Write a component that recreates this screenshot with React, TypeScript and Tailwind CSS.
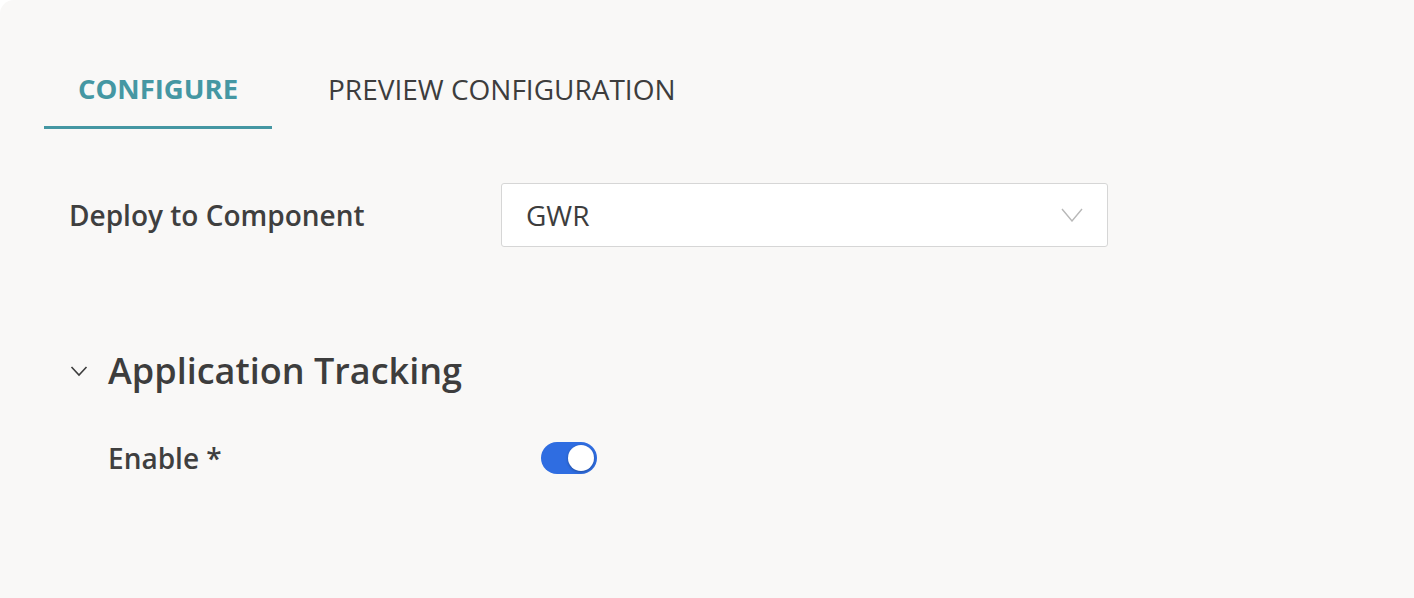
import React from "react";

export default function App() {
  return (
    <div className="w-[1414px] h-[598px] bg-white overflow-hidden" style={{ fontFamily: '"Open Sans", sans-serif' }}>
      <div className="h-full w-full bg-[#f9f8f7] rounded-tl-[14px] pt-[58px]">
        {/* Tabs */}
        <div className="flex pl-[44px]">
          <div className="w-[228px] h-[71px] flex flex-col items-center justify-between">
            <span className="text-[27.5px] font-bold text-[#4597a3] mt-[13px] leading-[36px]">CONFIGURE</span>
            <div className="h-[3px] w-full bg-[#4597a3]" />
          </div>
          <div className="pl-[56px]">
            <span className="block text-[28px] text-[#3d3d3d] mt-[13px] leading-[36px]">PREVIEW CONFIGURATION</span>
          </div>
        </div>

        {/* Deploy to Component */}
        <div className="flex items-center mt-[54px] pl-[69px]">
          <span className="w-[432px] text-[28px] font-semibold text-[#3f3f3f]">Deploy to Component</span>
          <div className="w-[607px] h-[64px] bg-white border border-[#d6d6d6] rounded-[3px] flex items-center justify-between pl-[24px] pr-[24px]">
            <span className="text-[28px] text-[#3d3d3d]">GWR</span>
            <svg width="22" height="14" viewBox="0 0 22 14" fill="none">
              <path d="M1 1 L11 13 L21 1" stroke="#b8b8b8" strokeWidth="1.4" />
            </svg>
          </div>
        </div>

        {/* Application Tracking */}
        <div className="flex items-center mt-[100px] pl-[70px]">
          <svg width="18" height="12" viewBox="0 0 18 12" fill="none" className="mr-[20px]">
            <path d="M1.5 2 L9 10 L16.5 2" stroke="#3d3d3d" strokeWidth="1.6" />
          </svg>
          <span className="text-[36px] font-semibold text-[#3d3d3d] leading-[48px]">Application Tracking</span>
        </div>

        <div className="flex items-center mt-[43px] pl-[108px]">
          <span className="w-[433px] text-[28px] font-semibold text-[#3f3f3f] leading-[40px]">Enable *</span>
          <div className="w-[56px] h-[32px] rounded-full bg-[#2f6de1] relative">
            <div className="absolute right-[3px] top-[3px] w-[26px] h-[26px] rounded-full bg-white shadow-[0_1px_3px_rgba(0,0,0,0.3)]" />
          </div>
        </div>
      </div>
    </div>
  );
}
